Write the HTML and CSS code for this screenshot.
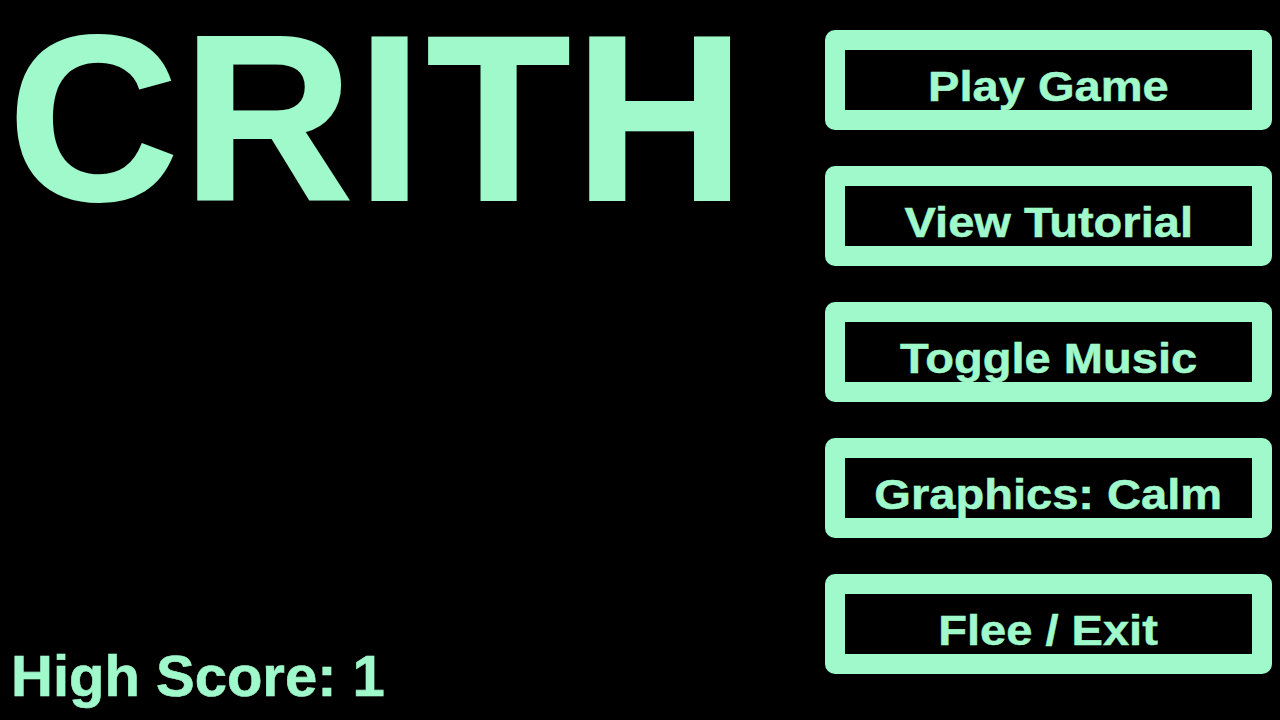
FILE: index.html
```html
<!DOCTYPE html>
<html lang="en">
<head>
<meta charset="utf-8">
<title>CRITH</title>
<link rel="stylesheet" href="styles.css">
</head>
<body>
<div class="screen">
  <div class="left">
    <h1 class="title">CRITH</h1>
    <div class="score">High Score: 1</div>
  </div>
  <nav class="menu">
    <div class="btn"><span class="label">Play Game</span></div>
    <div class="btn"><span class="label">View Tutorial</span></div>
    <div class="btn"><span class="label">Toggle Music</span></div>
    <div class="btn"><span class="label">Graphics: Calm</span></div>
    <div class="btn"><span class="label">Flee / Exit</span></div>
  </nav>
</div>
</body>
</html>
```

FILE: styles.css
```css
html, body {
  margin: 0;
  padding: 0;
  background: #000;
}

.screen {
  width: 1280px;
  height: 720px;
  display: flex;
  flex-direction: row;
  background: #000;
  color: #9ff9cb;
  font-family: "Liberation Sans", Arial, Helvetica, sans-serif;
  font-weight: bold;
  overflow: hidden;
}

.left {
  flex: 1;
  display: flex;
  flex-direction: column;
  justify-content: space-between;
  padding-bottom: 14px;
}

.title {
  margin: -14px 0 0 8px;
  font-size: 236px;
  line-height: 264px;
  letter-spacing: 4px;
  font-weight: bold;
  -webkit-text-stroke: 2px #9ff9cb;
}

.score {
  margin-left: 11px;
  font-size: 58px;
  line-height: 66px;
  margin-bottom: -3px;
  -webkit-text-stroke: 0.6px #9ff9cb;
}

.menu {
  display: flex;
  flex-direction: column;
  gap: 36px;
  padding-top: 30px;
  margin-right: 8px;
}

.btn {
  width: 407px;
  height: 44px;
  padding-top: 16px;
  border: 20px solid #9ff9cb;
  border-radius: 10px;
  background: #000;
  display: flex;
  justify-content: center;
}

.label {
  display: inline-block;
  font-size: 42px;
  line-height: 42px;
  white-space: nowrap;
  transform: scaleX(1.12);
  -webkit-text-stroke: 0.5px #9ff9cb;
}
```
